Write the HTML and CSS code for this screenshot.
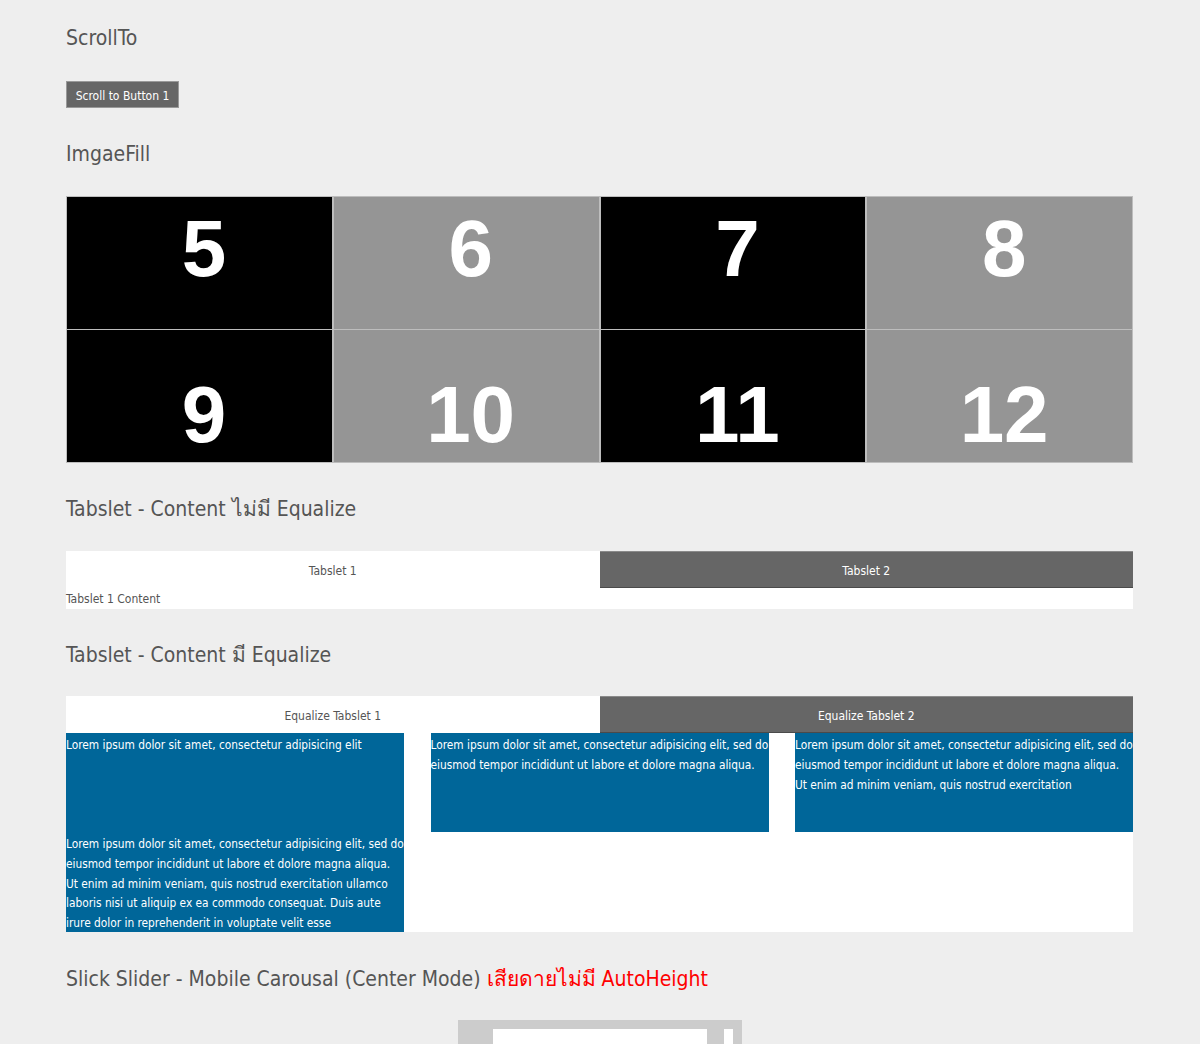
FILE: index.html
```html
<!DOCTYPE html>
<html lang="th">
<head>
<meta charset="utf-8">
<title>Demo</title>
<link rel="stylesheet" href="styles.css">
</head>
<body>
<main class="page">
  <h2 class="title title-first">ScrollTo</h2>
  <button class="btn" type="button">Scroll to Button 1</button>

  <h2 class="title">ImgaeFill</h2>
  <div class="fill-grid">
    <div class="cell dark top">5</div>
    <div class="cell grey top">6</div>
    <div class="cell dark top">7</div>
    <div class="cell grey top">8</div>
    <div class="cell dark bottom">9</div>
    <div class="cell grey bottom">10</div>
    <div class="cell dark bottom">11</div>
    <div class="cell grey bottom">12</div>
  </div>

  <h2 class="title">Tabslet - Content ไม่มี Equalize</h2>
  <div class="tabs">
    <div class="tab-row">
      <div class="tab">Tabslet 1</div>
      <div class="tab active">Tabslet 2</div>
    </div>
    <div class="tab-content">Tabslet 1 Content</div>
  </div>

  <h2 class="title title-tight">Tabslet - Content มี Equalize</h2>
  <div class="tabs">
    <div class="tab-row">
      <div class="tab">Equalize Tabslet 1</div>
      <div class="tab active">Equalize Tabslet 2</div>
    </div>
    <div class="eq-grid">
      <div class="eq-item">Lorem ipsum dolor sit amet, consectetur adipisicing elit</div>
      <div class="eq-item">Lorem ipsum dolor sit amet, consectetur adipisicing elit, sed do<br>eiusmod tempor incididunt ut labore et dolore magna aliqua.</div>
      <div class="eq-item">Lorem ipsum dolor sit amet, consectetur adipisicing elit, sed do<br>eiusmod tempor incididunt ut labore et dolore magna aliqua.<br>Ut enim ad minim veniam, quis nostrud exercitation</div>
      <div class="eq-item">Lorem ipsum dolor sit amet, consectetur adipisicing elit, sed do<br>eiusmod tempor incididunt ut labore et dolore magna aliqua.<br>Ut enim ad minim veniam, quis nostrud exercitation ullamco<br>laboris nisi ut aliquip ex ea commodo consequat. Duis aute<br>irure dolor in reprehenderit in voluptate velit esse</div>
    </div>
  </div>

  <h2 class="title title-slick">Slick Slider - Mobile Carousal (Center Mode) <span class="warn">เสียดายไม่มี AutoHeight</span></h2>
  <div class="carousel">
    <div class="slide current"></div>
    <div class="slide next"></div>
  </div>
</main>
</body>
</html>
```

FILE: styles.css
```css
html, body {
  margin: 0;
  padding: 0;
  background: #eeeeee;
}

body {
  font-family: "DejaVu Sans Condensed", "DejaVu Sans", "Noto Sans", sans-serif;
  color: #555555;
}

.page {
  width: 1067px;
  padding: 0 0 0 66px;
  display: flex;
  flex-direction: column;
  align-items: stretch;
}

.title {
  font-size: 21px;
  font-weight: normal;
  line-height: 30px;
  margin: 31px 0 27px;
  color: #555555;
  white-space: nowrap;
}

.title-first {
  margin-top: 23px;
  margin-bottom: 28px;
}

.title-tight {
  margin-bottom: 26px;
}

.title-slick {
  margin-top: 32px;
  margin-bottom: 26px;
}

.warn {
  color: #ff0000;
}

.btn {
  align-self: flex-start;
  width: 113px;
  height: 27px;
  padding: 3px 0 0;
  background: #666666;
  border: 1px solid #999999;
  color: #ffffff;
  font-family: inherit;
  font-size: 12px;
}

.fill-grid {
  display: grid;
  grid-template-columns: repeat(4, 1fr);
  grid-template-rows: 134px 133px;
}

.cell {
  box-sizing: border-box;
  border: 1px solid #bdbdbd;
  color: #ffffff;
  font-family: "Liberation Sans", Arial, sans-serif;
  font-weight: bold;
  font-size: 80px;
  line-height: 80px;
  text-align: center;
  padding-left: 9px;
}

.cell.dark { background: #000000; }
.cell.grey { background: #959595; }
.cell.top { padding-top: 12px; }
.cell.bottom { padding-top: 45px; border-top: 0; }

.tabs {
  background: #ffffff;
}

.tab-row {
  display: grid;
  grid-template-columns: 1fr 1fr;
  height: 37px;
}

.tab {
  display: flex;
  align-items: center;
  justify-content: center;
  font-size: 12px;
  color: #555555;
  padding-top: 2px;
  box-sizing: border-box;
}

.tab.active {
  background: #666666;
  color: #ffffff;
  border-top: 1px solid #8a8a8a;
  border-bottom: 1px solid #4a4a4a;
}

.tab-content {
  font-size: 12px;
  line-height: 21px;
  padding-top: 1px;
  height: 21px;
  box-sizing: border-box;
}

.eq-grid {
  display: grid;
  grid-template-columns: 338px 338px 338px;
  column-gap: 26.5px;
  grid-template-rows: 99px 100px;
}

.eq-item {
  background: #006699;
  color: #ffffff;
  font-size: 11.8px;
  line-height: 19.8px;
  padding-top: 3px;
  box-sizing: border-box;
  overflow: hidden;
}

.carousel {
  align-self: center;
  width: 284px;
  height: 200px;
  background: #cccccc;
  box-sizing: border-box;
  padding: 9px 9px 0 35px;
  display: flex;
  gap: 17px;
  overflow: hidden;
}

.slide {
  background: #ffffff;
  flex: none;
  height: 180px;
}

.slide.current { width: 214px; }
.slide.next { width: 9px; }
```
